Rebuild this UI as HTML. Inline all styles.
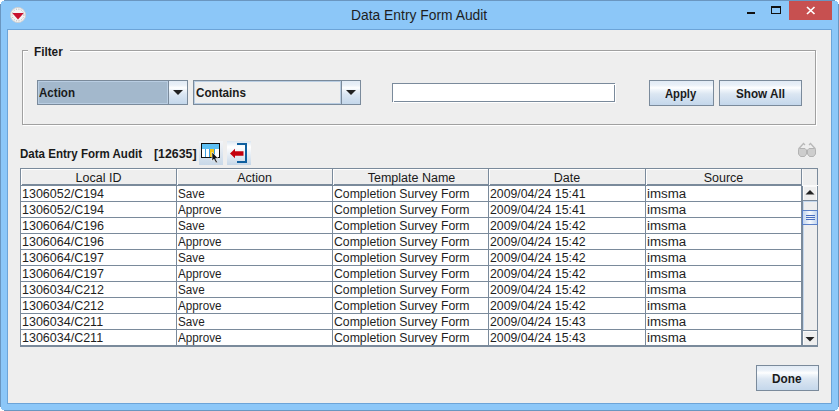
<!DOCTYPE html>
<html><head><meta charset="utf-8">
<style>
*{box-sizing:border-box;margin:0;padding:0}
html,body{width:839px;height:411px;overflow:hidden;background:#fff;font-family:"Liberation Sans",sans-serif}
.a{position:absolute}
.t{position:absolute;white-space:nowrap;line-height:1;transform-origin:0 0}
.b{font-weight:bold;color:#1a1a1a}
.grad{background:linear-gradient(to bottom,#e2ebf5 0px,#e9f0f8 4px,#ffffff 7px,#f4f8fc 8px,#dbe6f2 13px,#c4d7eb 100%)}
.btn{border:1px solid #7a8a9b}
.cell{position:absolute;font-size:12.5px;color:#1e1e1e;transform-origin:0 0;white-space:nowrap;line-height:16px}
</style></head><body>

<div class="a" style="left:0;top:0;width:839px;height:411px;background:#8cc7f8;border:1px solid #6a96c0"></div>
<div class="a" style="left:0px;top:0px;width:4px;height:1px;background:#fff;"></div>
<div class="a" style="left:0px;top:1px;width:2px;height:1px;background:#fff;"></div>
<div class="a" style="left:0px;top:2px;width:1px;height:2px;background:#fff;"></div>
<div class="a" style="left:2px;top:1px;width:2px;height:1px;background:#8cc7f8;"></div>
<div class="a" style="left:1px;top:2px;width:1px;height:2px;background:#8cc7f8;"></div>
<div class="a" style="left:835px;top:0px;width:4px;height:1px;background:#fff;"></div>
<div class="a" style="left:837px;top:1px;width:2px;height:1px;background:#fff;"></div>
<div class="a" style="left:838px;top:2px;width:1px;height:2px;background:#fff;"></div>
<div class="a" style="left:835px;top:1px;width:2px;height:1px;background:#8cc7f8;"></div>
<div class="a" style="left:837px;top:2px;width:1px;height:2px;background:#8cc7f8;"></div>
<div class="a" style="left:0px;top:410px;width:4px;height:1px;background:#fff;"></div>
<div class="a" style="left:0px;top:409px;width:2px;height:1px;background:#fff;"></div>
<div class="a" style="left:0px;top:407px;width:1px;height:2px;background:#fff;"></div>
<div class="a" style="left:2px;top:409px;width:2px;height:1px;background:#8cc7f8;"></div>
<div class="a" style="left:1px;top:407px;width:1px;height:2px;background:#8cc7f8;"></div>
<div class="a" style="left:835px;top:410px;width:4px;height:1px;background:#fff;"></div>
<div class="a" style="left:837px;top:409px;width:2px;height:1px;background:#fff;"></div>
<div class="a" style="left:838px;top:407px;width:1px;height:2px;background:#fff;"></div>
<div class="a" style="left:835px;top:409px;width:2px;height:1px;background:#8cc7f8;"></div>
<div class="a" style="left:837px;top:407px;width:1px;height:2px;background:#8cc7f8;"></div>
<div class="a" style="left:818px;top:139px;width:1px;height:1px;background:#c0c0c0;"></div>
<svg class="a" style="left:9px;top:6px" width="18" height="18" viewBox="0 0 18 18">
 <circle cx="9" cy="9" r="7.6" fill="#f4f4f4" stroke="#cfcfcf" stroke-width="0.9"/>
 <circle cx="9" cy="9" r="5.9" fill="none" stroke="#a8a8a8" stroke-width="0.9" stroke-dasharray="1 1.5"/>
 <path d="M3.2 7 H14.8 L9 13.6 Z" fill="#c8102e"/>
</svg>
<div class="t" style="left:351px;top:8px;font-size:14px;color:#1e1e1e;transform:scaleX(0.989)">Data Entry Form Audit</div>
<div class="a" style="left:747px;top:12px;width:8px;height:2px;background:#111;"></div>
<div class="a" style="left:771px;top:6px;width:10px;height:8px;border:1px solid #111;border-top-width:2px"></div>
<div class="a" style="left:789px;top:1px;width:43px;height:19px;background:#c75050;"></div>
<svg class="a" style="left:789px;top:1px" width="43" height="19" viewBox="0 0 43 19">
 <path d="M18 6 L25.5 13 M25.5 6 L18 13" stroke="#fff" stroke-width="1.7"/>
</svg>
<div class="a" style="left:7px;top:29px;width:825px;height:375px;border:1px solid #6ca4d8;background:#eeeeee"></div>
<div class="a" style="left:23px;top:51px;width:794px;height:75px;border:1px solid #fff"></div>
<div class="a" style="left:22px;top:50px;width:794px;height:75px;border:1px solid #a0a0a0"></div>
<div class="a" style="left:28px;top:48px;width:42px;height:6px;background:#eeeeee;"></div>
<div class="t b" style="left:34.2px;top:46px;font-size:12.5px;transform:scaleX(0.94)">Filter</div>
<div class="a" style="left:37px;top:80px;width:151px;height:25px;border:1px solid #7a8a9b;background:#a3b8cc"></div>
<div class="a" style="left:38px;top:81px;width:130px;height:23px;border:1px solid #b9cde2;border-right:none"></div>
<div class="a" style="left:167px;top:81px;width:1px;height:23px;background:#b9cde2;"></div>
<div class="a" style="left:168px;top:81px;width:1px;height:23px;background:#7a8a9b;"></div>
<div class="a grad" style="left:169px;top:81px;width:18px;height:23px"></div>
<svg class="a" style="left:169px;top:81px" width="18" height="23"><path d="M4 9 H14 L9 14 Z" fill="#222"/></svg>
<div class="t b" style="left:38.9px;top:87px;font-size:12.5px;transform:scaleX(0.926)">Action</div>
<div class="a" style="left:193px;top:80px;width:168px;height:25px;border:1px solid #7a8a9b;background:#eeeeee"></div>
<div class="a" style="left:194px;top:81px;width:147px;height:23px;border:1px solid #b9cde2;border-right:none"></div>
<div class="a" style="left:340px;top:81px;width:1px;height:23px;background:#b9cde2;"></div>
<div class="a" style="left:341px;top:81px;width:1px;height:23px;background:#7a8a9b;"></div>
<div class="a grad" style="left:342px;top:81px;width:18px;height:23px"></div>
<svg class="a" style="left:342px;top:81px" width="18" height="23"><path d="M4 9 H14 L9 14 Z" fill="#222"/></svg>
<div class="t b" style="left:195.6px;top:87px;font-size:12.5px;transform:scaleX(0.934)">Contains</div>
<div class="a" style="left:393px;top:84px;width:223px;height:19px;background:#fff;"></div>
<div class="a" style="left:392px;top:83px;width:223px;height:19px;border:1px solid #7a8a9b;background:#fff"></div>
<div class="a" style="left:393px;top:101px;width:1px;height:1px;background:#fff;"></div>
<div class="a" style="left:614px;top:84px;width:1px;height:1px;background:#fff;"></div>
<div class="a btn grad" style="left:649px;top:80px;width:65px;height:26px"></div>
<div class="t b" style="left:665.1px;top:88px;font-size:12.5px;transform:scaleX(0.898)">Apply</div>
<div class="a btn grad" style="left:719px;top:80px;width:83px;height:26px"></div>
<div class="t b" style="left:736.0px;top:88px;font-size:12.5px;transform:scaleX(0.936)">Show All</div>
<div class="t b" style="left:20px;top:148px;font-size:12.5px;transform:scaleX(0.923)">Data Entry Form Audit</div>
<div class="t b" style="left:154px;top:148px;font-size:12.5px;transform:scaleX(0.989)">[12635]</div>
<div class="a" style="left:199px;top:141px;width:24px;height:24px;background:linear-gradient(#f2f4f7,#c8d8e8)"></div>
<svg class="a" style="left:199px;top:141px" width="24" height="24" viewBox="0 0 24 24">
 <rect x="2.5" y="2.5" width="18" height="14" fill="#fff" stroke="#111" stroke-width="1"/>
 <rect x="3" y="3" width="17" height="5" fill="#5cbff4"/>
 <rect x="11" y="8" width="4" height="8" fill="#f5c518"/>
 <path d="M6.5 8 V16 M10.5 8 V16 M15.5 8 V16" stroke="#3aa0e0" stroke-width="1"/>
 <path d="M13 11 L13 20 L15 18.2 L17 22 L18.5 21.2 L16.6 17.6 L19.2 17.4 Z" fill="#111" stroke="#fff" stroke-width="0.6"/>
</svg>
<div class="a" style="left:227px;top:141px;width:24px;height:24px;background:linear-gradient(#dbe6f1,#ffffff 25%,#c6d7e8)"></div>
<svg class="a" style="left:227px;top:141px" width="24" height="24" viewBox="0 0 24 24">
 <path d="M10 3 H19 V21 H10" fill="none" stroke="#0f5f9f" stroke-width="2"/>
 <path d="M3 12.5 L8 7.8 V10.2 H16.5 V14.8 H8 V17.2 Z" fill="#c4000e"/>
</svg>
<svg class="a" style="left:796px;top:141px" width="22" height="18" viewBox="0 0 22 18">
 <g fill="#cdcdcd" stroke="#b3b3b3" stroke-width="1">
  <path d="M2.5 8.5 L3.5 7.5 H9 L10.5 9 V13 L8.5 15.5 H4.5 L2.5 13 Z"/>
  <path d="M19.5 8.5 L18.5 7.5 H13 L11.5 9 V13 L13.5 15.5 H17.5 L19.5 13 Z"/>
 </g>
 <rect x="10" y="10" width="2" height="3" fill="#b3b3b3"/>
 <path d="M2.5 8 L7.5 2.5 L9 4 M19.5 8 L14.5 2.5 L13 4" stroke="#b8b8b8" stroke-width="1.3" fill="none"/>
</svg>
<div class="a" style="left:20px;top:168px;width:798px;height:179px;border:1px solid #7a8a9b;background:#fff"></div>
<div class="a" style="left:21px;top:169px;width:796px;height:17px;background:#eeeeee;"></div>
<div class="a" style="left:21px;top:169px;width:780px;height:1px;background:#fff;"></div>
<div class="a" style="left:21px;top:184px;width:781px;height:2px;background:#7a8a9b;"></div>
<div class="a" style="left:21px;top:169px;width:1px;height:16px;background:#fff;"></div>
<div class="a" style="left:176px;top:169px;width:1px;height:17px;background:#7a8a9b;"></div>
<div class="cell" style="left:21px;width:155px;top:170px;text-align:center;color:#1a1a1a">Local ID</div>
<div class="a" style="left:177px;top:169px;width:1px;height:16px;background:#fff;"></div>
<div class="a" style="left:332px;top:169px;width:1px;height:17px;background:#7a8a9b;"></div>
<div class="cell" style="left:177px;width:155px;top:170px;text-align:center;color:#1a1a1a">Action</div>
<div class="a" style="left:333px;top:169px;width:1px;height:16px;background:#fff;"></div>
<div class="a" style="left:488px;top:169px;width:1px;height:17px;background:#7a8a9b;"></div>
<div class="cell" style="left:334px;width:155px;top:170px;text-align:center;color:#1a1a1a">Template Name</div>
<div class="a" style="left:489px;top:169px;width:1px;height:16px;background:#fff;"></div>
<div class="a" style="left:645px;top:169px;width:1px;height:17px;background:#7a8a9b;"></div>
<div class="cell" style="left:489px;width:156px;top:170px;text-align:center;color:#1a1a1a">Date</div>
<div class="a" style="left:646px;top:169px;width:1px;height:16px;background:#fff;"></div>
<div class="a" style="left:801px;top:169px;width:1px;height:17px;background:#7a8a9b;"></div>
<div class="cell" style="left:646px;width:155px;top:170px;text-align:center;color:#1a1a1a">Source</div>
<div class="cell" style="left:22px;top:186px;transform:scaleX(1.0)">1306052/C194</div>
<div class="cell" style="left:178px;top:186px;transform:scaleX(0.935)">Save</div>
<div class="cell" style="left:334px;top:186px;transform:scaleX(0.98)">Completion Survey Form</div>
<div class="cell" style="left:490px;top:186px;transform:scaleX(0.982)">2009/04/24 15:41</div>
<div class="cell" style="left:647px;top:186px;transform:scaleX(1.064)">imsma</div>
<div class="a" style="left:21px;top:201px;width:780px;height:1px;background:#7a8a9b;"></div>
<div class="cell" style="left:22px;top:202px;transform:scaleX(1.0)">1306052/C194</div>
<div class="cell" style="left:178px;top:202px;transform:scaleX(0.935)">Approve</div>
<div class="cell" style="left:334px;top:202px;transform:scaleX(0.98)">Completion Survey Form</div>
<div class="cell" style="left:490px;top:202px;transform:scaleX(0.982)">2009/04/24 15:41</div>
<div class="cell" style="left:647px;top:202px;transform:scaleX(1.064)">imsma</div>
<div class="a" style="left:21px;top:217px;width:780px;height:1px;background:#7a8a9b;"></div>
<div class="cell" style="left:22px;top:218px;transform:scaleX(1.0)">1306064/C196</div>
<div class="cell" style="left:178px;top:218px;transform:scaleX(0.935)">Save</div>
<div class="cell" style="left:334px;top:218px;transform:scaleX(0.98)">Completion Survey Form</div>
<div class="cell" style="left:490px;top:218px;transform:scaleX(0.982)">2009/04/24 15:42</div>
<div class="cell" style="left:647px;top:218px;transform:scaleX(1.064)">imsma</div>
<div class="a" style="left:21px;top:233px;width:780px;height:1px;background:#7a8a9b;"></div>
<div class="cell" style="left:22px;top:234px;transform:scaleX(1.0)">1306064/C196</div>
<div class="cell" style="left:178px;top:234px;transform:scaleX(0.935)">Approve</div>
<div class="cell" style="left:334px;top:234px;transform:scaleX(0.98)">Completion Survey Form</div>
<div class="cell" style="left:490px;top:234px;transform:scaleX(0.982)">2009/04/24 15:42</div>
<div class="cell" style="left:647px;top:234px;transform:scaleX(1.064)">imsma</div>
<div class="a" style="left:21px;top:249px;width:780px;height:1px;background:#7a8a9b;"></div>
<div class="cell" style="left:22px;top:250px;transform:scaleX(1.0)">1306064/C197</div>
<div class="cell" style="left:178px;top:250px;transform:scaleX(0.935)">Save</div>
<div class="cell" style="left:334px;top:250px;transform:scaleX(0.98)">Completion Survey Form</div>
<div class="cell" style="left:490px;top:250px;transform:scaleX(0.982)">2009/04/24 15:42</div>
<div class="cell" style="left:647px;top:250px;transform:scaleX(1.064)">imsma</div>
<div class="a" style="left:21px;top:265px;width:780px;height:1px;background:#7a8a9b;"></div>
<div class="cell" style="left:22px;top:266px;transform:scaleX(1.0)">1306064/C197</div>
<div class="cell" style="left:178px;top:266px;transform:scaleX(0.935)">Approve</div>
<div class="cell" style="left:334px;top:266px;transform:scaleX(0.98)">Completion Survey Form</div>
<div class="cell" style="left:490px;top:266px;transform:scaleX(0.982)">2009/04/24 15:42</div>
<div class="cell" style="left:647px;top:266px;transform:scaleX(1.064)">imsma</div>
<div class="a" style="left:21px;top:281px;width:780px;height:1px;background:#7a8a9b;"></div>
<div class="cell" style="left:22px;top:282px;transform:scaleX(1.0)">1306034/C212</div>
<div class="cell" style="left:178px;top:282px;transform:scaleX(0.935)">Save</div>
<div class="cell" style="left:334px;top:282px;transform:scaleX(0.98)">Completion Survey Form</div>
<div class="cell" style="left:490px;top:282px;transform:scaleX(0.982)">2009/04/24 15:42</div>
<div class="cell" style="left:647px;top:282px;transform:scaleX(1.064)">imsma</div>
<div class="a" style="left:21px;top:297px;width:780px;height:1px;background:#7a8a9b;"></div>
<div class="cell" style="left:22px;top:298px;transform:scaleX(1.0)">1306034/C212</div>
<div class="cell" style="left:178px;top:298px;transform:scaleX(0.935)">Approve</div>
<div class="cell" style="left:334px;top:298px;transform:scaleX(0.98)">Completion Survey Form</div>
<div class="cell" style="left:490px;top:298px;transform:scaleX(0.982)">2009/04/24 15:42</div>
<div class="cell" style="left:647px;top:298px;transform:scaleX(1.064)">imsma</div>
<div class="a" style="left:21px;top:313px;width:780px;height:1px;background:#7a8a9b;"></div>
<div class="cell" style="left:22px;top:314px;transform:scaleX(1.0)">1306034/C211</div>
<div class="cell" style="left:178px;top:314px;transform:scaleX(0.935)">Save</div>
<div class="cell" style="left:334px;top:314px;transform:scaleX(0.98)">Completion Survey Form</div>
<div class="cell" style="left:490px;top:314px;transform:scaleX(0.982)">2009/04/24 15:43</div>
<div class="cell" style="left:647px;top:314px;transform:scaleX(1.064)">imsma</div>
<div class="a" style="left:21px;top:329px;width:780px;height:1px;background:#7a8a9b;"></div>
<div class="cell" style="left:22px;top:330px;transform:scaleX(1.0)">1306034/C211</div>
<div class="cell" style="left:178px;top:330px;transform:scaleX(0.935)">Approve</div>
<div class="cell" style="left:334px;top:330px;transform:scaleX(0.98)">Completion Survey Form</div>
<div class="cell" style="left:490px;top:330px;transform:scaleX(0.982)">2009/04/24 15:43</div>
<div class="cell" style="left:647px;top:330px;transform:scaleX(1.064)">imsma</div>
<div class="a" style="left:21px;top:345px;width:780px;height:1px;background:#7a8a9b;"></div>
<div class="a" style="left:176px;top:186px;width:1px;height:160px;background:#7a8a9b;"></div>
<div class="a" style="left:332px;top:186px;width:1px;height:160px;background:#7a8a9b;"></div>
<div class="a" style="left:488px;top:186px;width:1px;height:160px;background:#7a8a9b;"></div>
<div class="a" style="left:645px;top:186px;width:1px;height:160px;background:#7a8a9b;"></div>
<div class="a" style="left:801px;top:186px;width:1px;height:160px;background:#7a8a9b;"></div>
<div class="a" style="left:802px;top:186px;width:15px;height:160px;background:#eeeeee;"></div>
<div class="a" style="left:801px;top:186px;width:2px;height:160px;background:#7a8a9b;"></div>
<div class="a" style="left:803px;top:201px;width:1px;height:144px;background:#c3d6ec;"></div>
<div class="a" style="left:803px;top:186px;width:14px;height:1px;background:#fafafa;"></div>
<div class="a" style="left:803px;top:186px;width:1px;height:14px;background:#fafafa;"></div>
<div class="a" style="left:803px;top:200px;width:14px;height:1px;background:#7a8a9b;"></div>
<div class="a" style="left:804px;top:201px;width:13px;height:1px;background:#c3d6ec;"></div>
<svg class="a" style="left:802px;top:186px" width="15" height="14"><path d="M3.5 8.5 H12.5 L8 4 Z" fill="#222"/></svg>
<div class="a" style="left:802px;top:210px;width:16px;height:15px;border:1px solid #5b80c8;background:linear-gradient(to right,#c2d5ee,#f6f9fd 50%,#c2d5ee)"></div>
<svg class="a" style="left:802px;top:210px" width="16" height="15"><path d="M4 5.5 H13 M4 7.5 H13 M4 9.5 H13" stroke="#4a6fc0" stroke-width="1"/></svg>
<div class="a" style="left:803px;top:330px;width:14px;height:1px;background:#7a8a9b;"></div>
<div class="a" style="left:803px;top:331px;width:1px;height:14px;background:#fafafa;"></div>
<div class="a" style="left:803px;top:331px;width:14px;height:1px;background:#fafafa;"></div>
<svg class="a" style="left:802px;top:332px" width="15" height="14"><path d="M3.5 5 H12.5 L8 9.5 Z" fill="#222"/></svg>
<div class="a" style="left:802px;top:169px;width:15px;height:16px;background:#eeeeee;"></div>
<div class="a" style="left:802px;top:169px;width:1px;height:16px;background:#fafafa;"></div>
<div class="a" style="left:802px;top:185px;width:16px;height:1px;background:#fafafa;"></div>
<div class="a" style="left:816px;top:187px;width:1px;height:13px;background:#fafafa;"></div>
<div class="a" style="left:21px;top:345px;width:796px;height:1px;background:#7a8a9b;"></div>
<div class="a btn grad" style="left:756px;top:365px;width:63px;height:26px"></div>
<div class="t b" style="left:772.3px;top:373px;font-size:12.5px;transform:scaleX(0.944)">Done</div>
</body></html>
